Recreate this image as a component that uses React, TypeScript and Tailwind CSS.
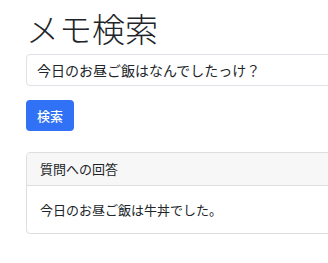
import React from 'react';

const FONT = '"Noto Sans CJK JP", "Noto Sans", sans-serif';

export default function App() {
  return (
    <div
      className="h-[263px] w-full overflow-hidden bg-white text-[#212529]"
      style={{ fontFamily: FONT }}
    >
      <main className="w-[380px] pl-[26px]">
        <h1 className="pt-[8px] text-[33px] font-light leading-[40px]">メモ検索</h1>

        <input
          type="text"
          defaultValue="今日のお昼ご飯はなんでしたっけ？"
          className="mt-[6px] block h-[32px] w-full rounded-[4px] border border-[#dee2e6] px-[10px] text-[14px] text-[#212529] outline-none"
          style={{ fontFamily: FONT }}
        />

        <button
          type="button"
          className="mt-[14px] h-[31px] w-[48px] rounded-[4px] bg-[#3171f5] text-[13px] font-medium text-white"
          style={{ fontFamily: FONT }}
        >
          検索
        </button>

        <section className="mt-[21px] overflow-hidden rounded-[4px] border border-[#dedede]">
          <div className="flex h-[33px] items-center border-b border-[#dedede] bg-[#f7f7f7] px-[13px] text-[13px]">
            質問への回答
          </div>
          <div className="flex h-[47px] items-center px-[13px] text-[13px]">
            今日のお昼ご飯は牛丼でした。
          </div>
        </section>
      </main>
    </div>
  );
}
